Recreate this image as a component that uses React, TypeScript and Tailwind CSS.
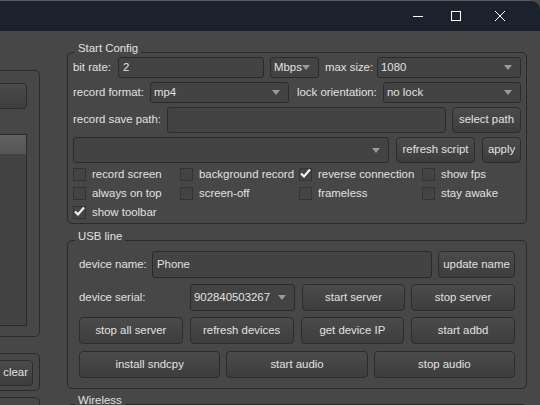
import React from "react";

const font = { fontFamily: '"Liberation Sans", Arial, sans-serif' };

function Arrow() {
  return (
    <svg width="8" height="5" viewBox="0 0 8 5" className="shrink-0">
      <path d="M0 0 L8 0 L4 5 Z" fill="#9a9a9a" />
    </svg>
  );
}

function Combo({ value, className = "" }: { value: string; className?: string }) {
  return (
    <div
      className={`flex items-center justify-between h-[21px] pl-[3px] pr-[8px] rounded-[3px] border border-[#2b2b2b] bg-[#434343] ${className}`}
    >
      <span>{value}</span>
      <Arrow />
    </div>
  );
}

function Input({ value = "", className = "" }: { value?: string; className?: string }) {
  return (
    <div
      className={`flex items-center h-[21px] px-[4px] rounded-[3px] border border-[#2b2b2b] bg-[#434343] ${className}`}
    >
      {value}
    </div>
  );
}

function Btn({ label, className = "" }: { label: string; className?: string }) {
  return (
    <button
      className={`flex items-center justify-center rounded-[4px] border border-[#2c2c2c] bg-gradient-to-b from-[#4b4b4b] to-[#3d3d3d] text-[#e2e2e2] ${className}`}
    >
      {label}
    </button>
  );
}

function Check({ label, checked = false }: { label: string; checked?: boolean }) {
  return (
    <div className="flex items-center gap-[6px] h-[19px]">
      <div className="relative w-[13px] h-[13px] shrink-0 border border-[#333333] bg-[#444444]">
        {checked && (
          <svg width="13" height="13" viewBox="0 0 13 13" className="absolute -left-[1px] -top-[2px]">
            <path d="M2 6.5 L5 9.5 L11 2.5" stroke="#f2f2f2" strokeWidth="2.2" fill="none" />
          </svg>
        )}
      </div>
      <span>{label}</span>
    </div>
  );
}

function Group({
  title,
  className = "",
  children,
}: {
  title: string;
  className?: string;
  children: React.ReactNode;
}) {
  return (
    <div className={`relative shrink-0 rounded-[5px] border border-[#2a2a2a] ${className}`}>
      <span className="absolute -top-[12px] left-[7px] px-[3px] bg-[#474747] leading-[14px]">{title}</span>
      {children}
    </div>
  );
}

export default function App() {
  return (
    <div
      style={font}
      className="w-[540px] h-[405px] overflow-hidden bg-[#474747] text-[11.4px] whitespace-nowrap text-[#e2e2e2] flex flex-col"
    >
      {/* title bar */}
      <div className="h-[31px] shrink-0 bg-[#1b212d] rounded-tr-[9px] flex items-center justify-end border-t border-[#5a5a5a]">
        <div className="w-[33px] h-[30px] flex items-center justify-center">
          <svg width="12" height="12" viewBox="0 0 12 12">
            <path d="M1 6.5 H11" stroke="#ffffff" strokeWidth="1" />
          </svg>
        </div>
        <div className="w-[44px] h-[30px] flex items-center justify-center">
          <svg width="12" height="12" viewBox="0 0 12 12">
            <rect x="1.5" y="1.5" width="9" height="9" stroke="#ffffff" strokeWidth="1" fill="none" />
          </svg>
        </div>
        <div className="w-[44px] h-[30px] flex items-center justify-center mr-[18px]">
          <svg width="12" height="12" viewBox="0 0 12 12">
            <path d="M1 1 L11 11 M11 1 L1 11" stroke="#ffffff" strokeWidth="1" />
          </svg>
        </div>
      </div>

      <div className="flex flex-1 min-h-0">
        {/* left panel, cut off by window edge */}
        <div className="w-[40px] shrink-0 overflow-hidden">
          <div className="-ml-[30px] w-[70px] mt-[39px] h-[267px] rounded-[5px] border border-[#2a2a2a] pt-[12px] pr-[12px]">
            <div className="h-[26px] rounded-[4px] border border-[#2c2c2c] bg-gradient-to-b from-[#4b4b4b] to-[#3d3d3d]" />
            <div className="mt-[25px] h-[192px] border border-[#2a2a2a] bg-[#434343]">
              <div className="h-[19px] bg-gradient-to-b from-[#616161] to-[#555555]" />
            </div>
          </div>
          <div className="-ml-[30px] w-[70px] mt-[16px] h-[38px] rounded-[5px] border border-[#2a2a2a] pt-[6px] pr-[6px]">
            <div className="h-[26px] rounded-[4px] border border-[#2c2c2c] bg-gradient-to-b from-[#4b4b4b] to-[#3d3d3d] flex items-center justify-end pr-[4px]">
              clear
            </div>
          </div>
          <div className="-ml-[30px] w-[70px] mt-[6px] h-[40px] rounded-[5px] border border-[#2a2a2a]" />
        </div>

        {/* right column */}
        <div className="ml-[27px] w-[460px] shrink-0 pt-[21px] flex flex-col">
          <Group title="Start Config" className="h-[172px] pt-[4px] px-[5px]">
            <div className="flex items-center h-[21px]">
              <span className="w-[45px]">bit rate:</span>
              <Input value="2" className="w-[146px]" />
              <Combo value="Mbps" className="w-[49px] ml-[6px]" />
              <span className="ml-[6px] w-[52px]">max size:</span>
              <Combo value="1080" className="flex-1" />
            </div>
            <div className="flex items-center h-[21px] mt-[4px]">
              <span className="w-[77px]">record format:</span>
              <Combo value="mp4" className="w-[139px]" />
              <span className="ml-[8px] w-[86px]">lock orientation:</span>
              <Combo value="no lock" className="flex-1" />
            </div>
            <div className="flex items-center h-[26px] mt-[4px]">
              <span className="w-[94px]">record save path:</span>
              <Input className="flex-1 h-[26px]" />
              <Btn label="select path" className="w-[69px] h-[26px] ml-[6px]" />
            </div>
            <div className="flex items-center h-[26px] mt-[4px]">
              <Combo value="" className="flex-1 h-[26px]" />
              <Btn label="refresh script" className="w-[79px] h-[26px] ml-[7px]" />
              <Btn label="apply" className="w-[39px] h-[26px] ml-[7px]" />
            </div>
            <div className="grid grid-cols-[107px_119px_123px_1fr] mt-[2px]">
              <Check label="record screen" />
              <Check label="background record" />
              <Check label="reverse connection" checked />
              <Check label="show fps" />
              <Check label="always on top" />
              <Check label="screen-off" />
              <Check label="frameless" />
              <Check label="stay awake" />
              <Check label="show toolbar" checked />
            </div>
          </Group>

          <Group title="USB line" className="mt-[16px] h-[149px] pt-[10px] px-[11px] flex flex-col gap-[6px]">
            <div className="flex items-center h-[27px]">
              <span className="w-[73px]">device name:</span>
              <Input value="Phone" className="flex-1 h-[27px]" />
              <Btn label="update name" className="w-[77px] h-[27px] ml-[6px]" />
            </div>
            <div className="flex items-center h-[27px]">
              <span className="w-[111px]">device serial:</span>
              <Combo value="902840503267" className="w-[105px] h-[27px]" />
              <Btn label="start server" className="w-[103px] h-[27px] ml-[7px]" />
              <Btn label="stop server" className="flex-1 h-[27px] ml-[6px]" />
            </div>
            <div className="grid grid-cols-4 gap-[7px] h-[27px]">
              <Btn label="stop all server" />
              <Btn label="refresh devices" />
              <Btn label="get device IP" />
              <Btn label="start adbd" />
            </div>
            <div className="grid grid-cols-3 gap-[6px] h-[27px] mt-[1px]">
              <Btn label="install sndcpy" />
              <Btn label="start audio" />
              <Btn label="stop audio" />
            </div>
          </Group>

          <Group title="Wireless" className="mt-[15px] h-[40px]">
            <div />
          </Group>
        </div>
      </div>
    </div>
  );
}
